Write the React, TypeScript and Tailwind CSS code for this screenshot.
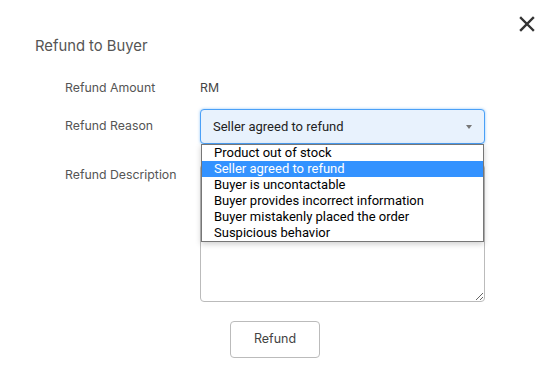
import React from 'react';

const reasons = [
  'Product out of stock',
  'Seller agreed to refund',
  'Buyer is uncontactable',
  'Buyer provides incorrect information',
  'Buyer mistakenly placed the order',
  'Suspicious behavior',
];

export default function App() {
  const selected = 1;
  return (
    <div className="relative h-[391px] w-[548px] overflow-hidden bg-white font-['Inter',sans-serif] text-[#555]">
      <button className="absolute right-[12px] top-[15px] flex h-[18px] w-[18px] items-center justify-center text-[#333]">
        <svg width="16" height="16" viewBox="0 0 16 16" fill="none" stroke="currentColor" strokeWidth="2.4" strokeLinecap="square">
          <path d="M2 2L14 14M14 2L2 14" />
        </svg>
      </button>

      <div className="flex flex-col pl-[35px] pt-[34px]">
        <h1 className="text-[14.8px] leading-6 text-[#555]">Refund to Buyer</h1>

        <div className="mt-[20px] flex items-center pl-[30px] text-[12.3px]">
          <span className="w-[135px] leading-5">Refund Amount</span>
          <span className="leading-5 text-[#444]">RM</span>
        </div>

        <div className="mt-[11px] flex items-center pl-[30px] text-[12.3px]">
          <span className="w-[135px]">Refund Reason</span>
          <div className="relative w-[285px]">
            <div className="flex h-[35px] items-center justify-between rounded-[4px] border border-[#4aa0f7] bg-[#e8f2fd] pl-[12px] pr-[12px] font-['Roboto',sans-serif] text-[13px] text-[#222] shadow-[0_0_3px_rgba(74,160,247,0.6)]">
              <span>Seller agreed to refund</span>
              <span className="h-0 w-0 border-x-[3.5px] border-t-[4px] border-x-transparent border-t-[#777]" />
            </div>
            <ul className="absolute left-[1px] top-[35px] z-10 w-[283px] border border-[#767676] bg-white font-['Roboto',sans-serif] text-[13px] leading-[16px] text-black shadow-[0_2px_6px_rgba(0,0,0,0.2)]">
              {reasons.map((r, i) => (
                <li
                  key={r}
                  className={`h-[16px] overflow-hidden pl-[12px] ${i === selected ? 'bg-[#3392ff] text-white' : ''}`}
                >
                  {r}
                </li>
              ))}
            </ul>
          </div>
        </div>

        <div className="mt-[20px] flex items-start pl-[30px] text-[12.3px]">
          <span className="w-[135px] pt-[2px]">Refund Description</span>
          <textarea className="h-[138px] w-[285px] rounded-[4px] border border-[#bbb] outline-none" />
        </div>

        <div className="mt-[19px] pl-[195px]">
          <button className="h-[37px] w-[90px] rounded-[4px] border border-[#bbb] bg-white text-[12.5px] text-[#444]">
            Refund
          </button>
        </div>
      </div>
    </div>
  );
}
